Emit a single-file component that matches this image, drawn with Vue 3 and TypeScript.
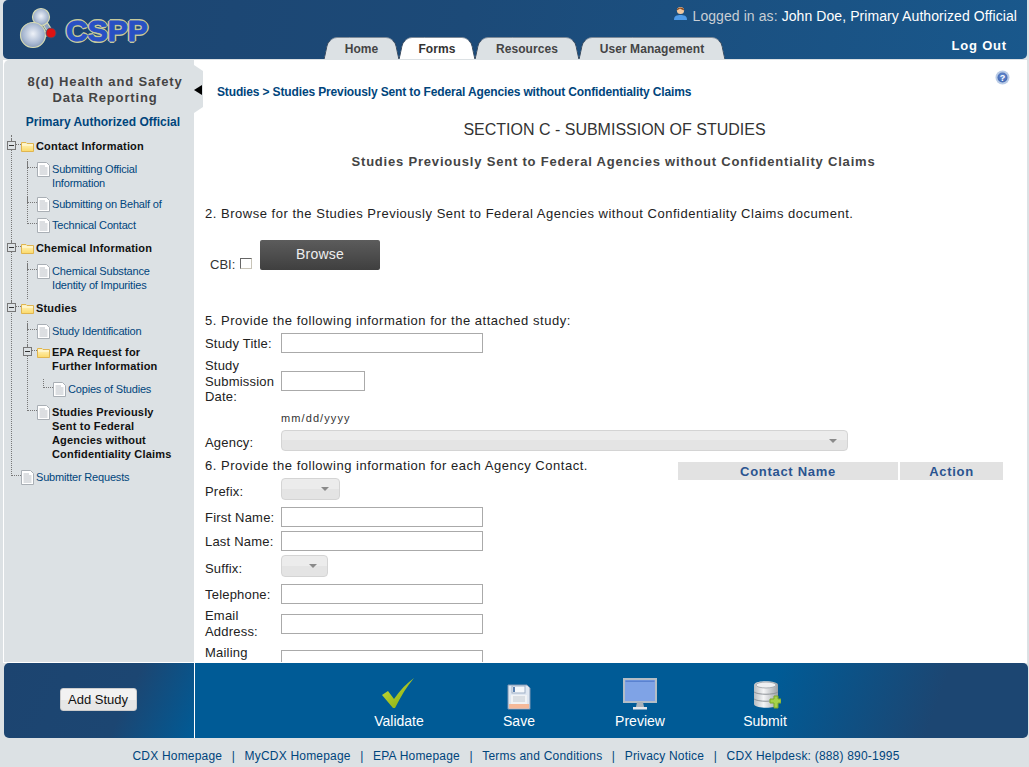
<template>
  <div class="page">
    <!-- Header -->
    <header class="header">
      <div class="logo">
        <svg class="logo-mark" width="50" height="48" viewBox="0 0 50 48">
          <defs>
            <radialGradient id="ball" cx="50%" cy="45%" r="60%">
              <stop offset="0" stop-color="#eef2f8" />
              <stop offset="0.65" stop-color="#a9b9d2" />
              <stop offset="1" stop-color="#7f93b4" />
            </radialGradient>
          </defs>
          <g stroke="#d8dcb4" stroke-width="6" stroke-linecap="round">
            <path d="M16 31 L24 13 M24 13 L34 29 M16 31 L34 29" />
          </g>
          <g stroke="#8fa3c2" stroke-width="3.5" stroke-linecap="round">
            <path d="M16 31 L24 13 M24 13 L34 29 M16 31 L34 29" />
          </g>
          <circle cx="24" cy="13" r="8.5" fill="url(#ball)" stroke="#d8dcb4" stroke-width="1.2" />
          <circle cx="16" cy="31" r="12.5" fill="url(#ball)" stroke="#d8dcb4" stroke-width="1.2" />
          <circle cx="34" cy="29" r="5" fill="#dc1212" stroke="#3a4f70" stroke-width="0.8" />
        </svg>
        <span class="logo-text">CSPP</span>
      </div>

      <div class="header-right">
        <div class="login-line">
          <svg class="user-icon" width="15" height="16" viewBox="0 0 15 16">
            <path d="M1 15 C1 10.5 4 10 7.5 10 C11 10 14 10.5 14 15 Z" fill="#4f9be8" />
            <circle cx="7.5" cy="5.5" r="3.6" fill="#f2c9a0" />
            <path d="M3.8 5.5 C3.6 1.4 11.4 1.4 11.2 5.5 C9.5 5 8 4 7 3.6 C6 4.4 5 5 3.8 5.5 Z" fill="#8a4a20" />
          </svg>
          <span class="login-label">Logged in as:</span>
          <span class="login-name">John Doe, Primary Authorized Official</span>
        </div>
        <nav class="nav-row">
          <ul class="tabs">
            <li v-for="tab in tabs" :key="tab.label" class="tab" :class="{ active: tab.active }" :style="{ width: tab.width + 'px' }">
              <span>{{ tab.label }}</span>
            </li>
          </ul>
          <a class="logout">Log Out</a>
        </nav>
      </div>
    </header>

    <!-- Middle -->
    <div class="middle">
      <aside class="sidebar">
        <div class="collapse-tab"><i class="collapse-arrow"></i></div>
        <h2 class="side-title">8(d) Health and Safety<br />Data Reporting</h2>
        <p class="side-role">Primary Authorized Official</p>

        <ul class="tree root">
          <li>
            <div class="node heading"><i class="toggle"></i><svg class="ic folder" viewBox="0 0 13 11"><use href="#folder-shape" /></svg><span>Contact Information</span></div>
            <ul class="tree">
              <li><div class="node"><svg class="ic doc" viewBox="0 0 14 15"><use href="#doc-shape" /></svg><span>Submitting Official<br />Information</span></div></li>
              <li><div class="node"><svg class="ic doc" viewBox="0 0 14 15"><use href="#doc-shape" /></svg><span>Submitting on Behalf of</span></div></li>
              <li><div class="node"><svg class="ic doc" viewBox="0 0 14 15"><use href="#doc-shape" /></svg><span>Technical Contact</span></div></li>
            </ul>
          </li>
          <li>
            <div class="node heading"><i class="toggle"></i><svg class="ic folder" viewBox="0 0 13 11"><use href="#folder-shape" /></svg><span>Chemical Information</span></div>
            <ul class="tree">
              <li class="through"><div class="node"><svg class="ic doc" viewBox="0 0 14 15"><use href="#doc-shape" /></svg><span>Chemical Substance<br />Identity of Impurities</span></div></li>
            </ul>
          </li>
          <li>
            <div class="node heading"><i class="toggle"></i><svg class="ic folder" viewBox="0 0 13 11"><use href="#folder-shape" /></svg><span>Studies</span></div>
            <ul class="tree">
              <li><div class="node"><svg class="ic doc" viewBox="0 0 14 15"><use href="#doc-shape" /></svg><span>Study Identification</span></div></li>
              <li>
                <div class="node heading"><i class="toggle"></i><svg class="ic folder" viewBox="0 0 13 11"><use href="#folder-shape" /></svg><span>EPA Request for<br />Further Information</span></div>
                <ul class="tree">
                  <li><div class="node"><svg class="ic doc" viewBox="0 0 14 15"><use href="#doc-shape" /></svg><span>Copies of Studies</span></div></li>
                </ul>
              </li>
              <li><div class="node heading current"><svg class="ic doc" viewBox="0 0 14 15"><use href="#doc-shape" /></svg><span>Studies Previously<br />Sent to Federal<br />Agencies without<br />Confidentiality Claims</span></div></li>
            </ul>
          </li>
          <li><div class="node"><svg class="ic doc" viewBox="0 0 14 15"><use href="#doc-shape" /></svg><span>Submitter Requests</span></div></li>
        </ul>

        <!-- shared tree icons -->
        <svg width="0" height="0" class="defs">
          <defs>
            <linearGradient id="folder-fill" x1="0" y1="0" x2="0" y2="1">
              <stop offset="0" stop-color="#fff6c8" />
              <stop offset="1" stop-color="#fbd968" />
            </linearGradient>
            <g id="folder-shape">
              <path d="M.5 10.5V1.5H5L6 2.5H12.5V10.5Z" fill="url(#folder-fill)" stroke="#e0b550" />
              <path d="M1 4H12" stroke="#fffbe6" />
            </g>
            <g id="doc-shape">
              <path d="M.5.5H9.5L12.5 3.5V14.5H.5Z" fill="#fff" stroke="#a9afb5" />
              <path d="M2.5 4H8M2.5 6H10.5M2.5 8H10.5M2.5 10H10.5M2.5 12H10.5" stroke="#b9bec4" />
            </g>
          </defs>
        </svg>
      </aside>

      <main class="content">
        <svg class="help" width="15" height="15" viewBox="0 0 15 15">
          <defs>
            <radialGradient id="help-ball" cx="50%" cy="40%" r="60%">
              <stop offset="0" stop-color="#6f93d8" />
              <stop offset="1" stop-color="#3f66b0" />
            </radialGradient>
          </defs>
          <circle cx="7.5" cy="7.5" r="7" fill="#b9cbe6" />
          <circle cx="7.5" cy="7.5" r="5" fill="url(#help-ball)" />
          <text x="7.5" y="10.8" text-anchor="middle" class="help-q">?</text>
        </svg>

        <p class="crumb">Studies &gt; Studies Previously Sent to Federal Agencies without Confidentiality Claims</p>
        <h1 class="section-title">SECTION C - SUBMISSION OF STUDIES</h1>
        <h2 class="section-sub">Studies Previously Sent to Federal Agencies without Confidentiality Claims</h2>

        <p class="question q2">2. Browse for the Studies Previously Sent to Federal Agencies without Confidentiality Claims document.</p>
        <div class="browse-row">
          <label class="cbi">CBI:<i class="checkbox"></i></label>
          <button class="browse">Browse</button>
        </div>

        <p class="question q5">5. Provide the following information for the attached study:</p>
        <div class="field f-title">
          <label>Study Title:</label>
          <i class="input"></i>
        </div>
        <div class="field f-date">
          <label>Study Submission Date:</label>
          <i class="input short"></i>
        </div>
        <div class="date-hint">mm/dd/yyyy</div>
        <div class="field f-agency">
          <label>Agency:</label>
          <i class="select agency"></i>
        </div>

        <div class="contact-block">
          <div class="contact-form">
            <p class="question q6">6. Provide the following information for each Agency Contact.</p>
            <div class="field f-prefix"><label>Prefix:</label><i class="select prefix"></i></div>
            <div class="field f-first"><label>First Name:</label><i class="input"></i></div>
            <div class="field f-last"><label>Last Name:</label><i class="input"></i></div>
            <div class="field f-suffix"><label>Suffix:</label><i class="select suffix"></i></div>
            <div class="field f-phone"><label>Telephone:</label><i class="input"></i></div>
            <div class="field f-email"><label>Email Address:</label><i class="input"></i></div>
            <div class="field f-mail"><label>Mailing Address:</label><i class="input"></i></div>
          </div>
          <div class="contact-table">
            <div class="th th-name">Contact Name</div>
            <div class="th th-action">Action</div>
          </div>
        </div>
      </main>
    </div>

    <!-- Action bar -->
    <div class="actions">
      <div class="actions-left">
        <button class="add-study">Add Study</button>
      </div>
      <div class="actions-main">
        <a class="action a-validate">
          <svg width="36" height="32" viewBox="0 0 36 32">
            <defs>
              <linearGradient id="check" x1="0" y1="0" x2="1" y2="1">
                <stop offset="0" stop-color="#cfe23a" />
                <stop offset="1" stop-color="#7ea50e" />
              </linearGradient>
            </defs>
            <path d="M1 17 L7 13 L13 21 C19 12 26 5 33 0 C26 8 20 18 14 30 L12 30 Z" fill="url(#check)" />
          </svg>
          <span>Validate</span>
        </a>
        <a class="action a-save">
          <svg width="24" height="26" viewBox="0 0 24 26">
            <path d="M1 1H20L23 4V25H1Z" fill="#dfe7f1" stroke="#7f96b2" />
            <rect x="5" y="2" width="13" height="7" fill="#f5f8fb" stroke="#9fb0c6" />
            <rect x="6" y="3" width="2" height="5" fill="#5a7fae" />
            <rect x="4" y="11" width="16" height="9" fill="#f1f3f5" />
            <path d="M6 13H18M6 15H18M6 17H18" stroke="#c2c9d0" />
            <rect x="2" y="20" width="20" height="4.5" fill="#f5b999" />
          </svg>
          <span>Save</span>
        </a>
        <a class="action a-preview">
          <svg width="34" height="32" viewBox="0 0 34 32">
            <rect x="1" y="1" width="32" height="23" fill="#7fa3e6" stroke="#b4bdc6" stroke-width="2" />
            <rect x="2.5" y="2.5" width="29" height="1.5" fill="#5a82d0" />
            <path d="M14 24H20L21 29H13Z" fill="#a9b2ba" />
            <rect x="10" y="29" width="14" height="2.5" fill="#e4e8ec" />
          </svg>
          <span>Preview</span>
        </a>
        <a class="action a-submit">
          <svg width="28" height="30" viewBox="0 0 28 30">
            <defs>
              <linearGradient id="db" x1="0" y1="0" x2="1" y2="0">
                <stop offset="0" stop-color="#b8bcc0" />
                <stop offset="0.4" stop-color="#f4f5f6" />
                <stop offset="1" stop-color="#9da2a7" />
              </linearGradient>
            </defs>
            <path d="M1 5C1 0 25 0 25 5V24C25 29 1 29 1 24Z" fill="url(#db)" />
            <ellipse cx="13" cy="5" rx="10" ry="3" fill="#eef0f2" stroke="#a9aeb3" />
            <path d="M1 12C5 15 21 15 25 12M1 19C5 22 21 22 25 19" stroke="#8f9499" fill="none" />
            <path d="M17 19H21V16H25V19H28V23H25V28H21V23H17Z" fill="#a6d24a" stroke="#7da92a" />
          </svg>
          <span>Submit</span>
        </a>
      </div>
    </div>

    <!-- Footer -->
    <footer class="footer">
      <template v-for="(link, i) in links" :key="link">
        <span v-if="i > 0" class="sep">|</span>
        <a>{{ link }}</a>
      </template>
    </footer>
  </div>
</template>

<script setup lang="ts">
interface Tab {
  label: string
  width: number
  active?: boolean
}

const tabs: Tab[] = [
  { label: 'Home', width: 75 },
  { label: 'Forms', width: 76, active: true },
  { label: 'Resources', width: 104 },
  { label: 'User Management', width: 146 }
]

const links: string[] = [
  'CDX Homepage',
  'MyCDX Homepage',
  'EPA Homepage',
  'Terms and Conditions',
  'Privacy Notice',
  'CDX Helpdesk: (888) 890-1995'
]
</script>

<style>
html,
body {
  margin: 0;
  background: #dce1e4;
}
</style>

<style scoped>
/* ===== Base ===== */
.page {
  width: 1029px;
  height: 767px;
  overflow: hidden;
  font-family: "Liberation Sans", Arial, sans-serif;
  color: #222;
  background: #dce1e4;
}

ul {
  list-style: none;
  margin: 0;
  padding: 0;
}

p,
h1,
h2 {
  margin: 0;
}

/* ===== Header ===== */
.header {
  margin-left: 3px;
  width: 1024px;
  height: 59px;
  display: flex;
  justify-content: space-between;
  background: linear-gradient(100deg, #1c4470 0%, #1c4a78 45%, #19588c 100%);
  border-radius: 5px 0 5px 5px;
}

.logo {
  display: flex;
  align-items: flex-start;
  padding: 7px 0 0 14px;
}

.logo-mark {
  display: block;
  margin-top: -3px;
}

.logo-text {
  margin: 8px 0 0 -1px;
  font-size: 30px;
  line-height: 32px;
  font-weight: 700;
  color: #2850c4;
  -webkit-text-stroke: 1px #2850c4;
  text-shadow:
    2px 0 0 #c5c99c, -2px 0 0 #c5c99c, 0 2px 0 #c5c99c, 0 -2px 0 #c5c99c,
    1px 1px 0 #c5c99c, -1px -1px 0 #c5c99c, 1px -1px 0 #c5c99c, -1px 1px 0 #c5c99c;
}

.header-right {
  width: 704px;
  display: flex;
  flex-direction: column;
}

.login-line {
  height: 37px;
  padding: 7px 10px 0 0;
  box-sizing: border-box;
  display: flex;
  justify-content: flex-end;
  align-items: flex-start;
  font-size: 14px;
  line-height: 18px;
  letter-spacing: 0.08px;
}

.user-icon {
  margin: -2px 5px 0 0;
}

.login-label {
  color: #c8ced4;
  margin-right: 4px;
}

.login-name {
  color: #fff;
}

.nav-row {
  display: flex;
  justify-content: space-between;
  height: 22px;
}

.tabs {
  display: flex;
  margin-left: 1px;
}

.tab {
  position: relative;
  height: 22px;
  box-sizing: border-box;
  display: flex;
  align-items: center;
  justify-content: center;
  padding-top: 1px;
  font-size: 12px;
  font-weight: 700;
  letter-spacing: 0.08px;
  color: #444;
}

.tab span {
  position: relative;
  z-index: 1;
}

.tab::before,
.tab::after {
  content: "";
  position: absolute;
  top: 0;
  bottom: 0;
  width: 60%;
  background: #dce1e4;
  border-top: 1px solid #7d8a98;
  box-sizing: border-box;
}

.tab::before {
  left: 2px;
  transform: skewX(-12deg);
  border-left: 1px solid #39495c;
  border-radius: 9px 0 0 0;
}

.tab::after {
  right: 2px;
  transform: skewX(12deg);
  border-right: 1px solid #39495c;
  border-radius: 0 9px 0 0;
}

.tab.active {
  color: #333;
  z-index: 2;
}

.tab.active::before,
.tab.active::after {
  background: #fff;
}

.logout {
  margin: 1px 20px 0 0;
  font-size: 13px;
  line-height: 16px;
  font-weight: 700;
  letter-spacing: 0.8px;
  color: #fff;
}

/* ===== Middle ===== */
.middle {
  margin: 1px 0 0 3px;
  width: 1024px;
  height: 603px;
  padding-bottom: 1px;
  display: flex;
  background: #fff;
  border-left: 1px solid #fff;
  box-sizing: border-box;
}

.sidebar {
  position: relative;
  flex: 0 0 190px;
  background: #dce1e4;
  border-radius: 5px 0 0 0;
}

.collapse-tab {
  position: absolute;
  z-index: 2;
  top: 5px;
  left: 190px;
  width: 9px;
  height: 48px;
  background: #dce1e4;
  clip-path: polygon(0 0, 100% 6px, 100% 42px, 0 100%);
}

.collapse-arrow {
  position: absolute;
  left: 0;
  top: 20px;
  width: 0;
  height: 0;
  border-style: solid;
  border-width: 5px 8px 5px 0;
  border-color: transparent #000 transparent transparent;
}

.side-title {
  padding: 14px 0 0 12px;
  font-size: 13px;
  line-height: 16px;
  font-weight: 700;
  letter-spacing: 0.85px;
  text-align: center;
  color: #444;
}

.side-role {
  margin-top: 8px;
  font-size: 12px;
  line-height: 16px;
  font-weight: 700;
  text-align: center;
  color: #00457c;
  padding-left: 8px;
}

/* ===== Tree ===== */
.tree {
  padding-left: 16px;
  padding-top: 9px;
  padding-bottom: 2px;
}

.tree.root {
  margin-top: 9px;
  padding: 0 0 0 17px;
}

.tree li {
  position: relative;
  margin-top: 7px;
}

.tree li:first-child {
  margin-top: 0;
}

/* dotted connector */
.tree li::before {
  content: "";
  position: absolute;
  left: -10px;
  top: -3px;
  width: 10px;
  height: 9px;
  border-left: 1px dotted #777;
  border-bottom: 1px dotted #777;
  box-sizing: border-box;
}

.tree li:not(:last-child)::after,
.tree li.through::after {
  content: "";
  position: absolute;
  left: -10px;
  top: 0;
  bottom: -7px;
  border-left: 1px dotted #777;
}

.tree.root > li:first-child::before {
  top: -4px;
  height: 10px;
}

.node {
  position: relative;
  display: flex;
  font-size: 11px;
  line-height: 14px;
  letter-spacing: -0.18px;
  color: #00457c;
}

.node.heading {
  font-weight: 700;
  letter-spacing: 0.18px;
  color: #111;
}

.toggle {
  position: absolute;
  z-index: 1;
  left: -14px;
  top: 2px;
  width: 9px;
  height: 9px;
  box-sizing: border-box;
  border: 1px solid #777;
  background: linear-gradient(#dce1e4 3px, #333 3px, #333 4px, #dce1e4 4px);
  background-size: 5px 7px;
  background-repeat: no-repeat;
  background-position: 1px 0;
  background-color: #dce1e4;
}

.ic {
  flex: 0 0 auto;
  display: block;
  margin-right: 2px;
}

.ic.folder {
  width: 13px;
  height: 11px;
  margin-top: 2px;
}

.ic.doc {
  width: 14px;
  height: 15px;
  margin-right: 1px;
  margin-bottom: -1px;
}

.defs {
  position: absolute;
}

/* ===== Content ===== */
.content {
  position: relative;
  flex: 1;
  min-width: 0;
  overflow: hidden;
  padding-left: 11px;
  font-size: 13px;
}

.help {
  position: absolute;
  top: 10px;
  left: 801px;
}

.help-q {
  font-family: "Liberation Sans", Arial, sans-serif;
  font-size: 9px;
  font-weight: 700;
  fill: #fff;
}

.crumb {
  margin: 25px 0 0 12px;
  font-size: 12px;
  line-height: 14px;
  font-weight: 700;
  letter-spacing: -0.14px;
  color: #00457c;
}

.section-title {
  margin: 22px 0 0 -3px;
  font-size: 16px;
  line-height: 18px;
  font-weight: 400;
  text-align: center;
  color: #333;
}

.section-sub {
  margin: 15px 0 0 -5px;
  font-size: 13px;
  line-height: 16px;
  font-weight: 700;
  letter-spacing: 0.8px;
  text-align: center;
  color: #444;
}

.question {
  font-size: 13px;
  line-height: 16px;
  letter-spacing: 0.52px;
  color: #222;
}

.q2 {
  margin-top: 36px;
}

.browse-row {
  display: flex;
  margin-top: 18px;
  height: 30px;
}

.cbi {
  display: flex;
  align-items: flex-start;
  width: 55px;
  padding: 17px 0 0 5px;
  box-sizing: border-box;
  line-height: 16px;
  font-size: 13px;
  color: #333;
}

.checkbox {
  flex: 0 0 auto;
  width: 12px;
  height: 11px;
  margin: 1px 0 0 5px;
  box-sizing: border-box;
  border: 1px solid #666;
  border-right-color: #c8c4b8;
  border-bottom-color: #c8c4b8;
  background: #fff;
}

.browse {
  width: 120px;
  height: 30px;
  padding: 0 0 2px;
  border: 0;
  border-radius: 2px;
  background: linear-gradient(#5c5c5c, #3f3f3f);
  font-family: inherit;
  font-size: 14px;
  letter-spacing: 0.2px;
  color: #eee;
}

.q5 {
  margin-top: 43px;
}

/* ===== Form rows ===== */
.field {
  display: flex;
  align-items: center;
  color: #222;
}

.field label {
  flex: 0 0 76px;
  font-size: 13px;
  line-height: 16px;
  letter-spacing: 0.2px;
}

.input {
  display: block;
  width: 202px;
  height: 20px;
  box-sizing: border-box;
  border: 1px solid #aaa;
  background: #fff;
}

.input.short {
  width: 84px;
}

.select {
  position: relative;
  display: block;
  box-sizing: border-box;
  height: 22px;
  border: 1px solid #d4d4d4;
  border-radius: 4px;
  background: linear-gradient(#ececec 50%, #e4e4e4 50%);
}

.select::after {
  content: "";
  position: absolute;
  top: 8px;
  right: 10px;
  width: 0;
  height: 0;
  border-style: solid;
  border-width: 4px 4px 0;
  border-color: #8a8a8a transparent transparent;
}

.select.agency {
  width: 567px;
  height: 21px;
}

.select.prefix {
  width: 59px;
}

.select.suffix {
  width: 47px;
}

.f-title label,
.f-first label,
.f-last label,
.f-phone label {
  padding-top: 2px;
}

.f-title {
  margin-top: 4px;
}

.f-date {
  margin-top: 5px;
}

.f-date label {
  line-height: 15.6px;
}

.date-hint {
  margin: 7px 0 0 76px;
  font-size: 11px;
  line-height: 12px;
  letter-spacing: 1.1px;
  color: #333;
}

.f-agency {
  margin-top: 6px;
  align-items: flex-start;
}

.f-agency label {
  padding-top: 5px;
}

.contact-block {
  display: flex;
  align-items: flex-start;
}

.contact-form {
  flex: 0 0 473px;
  width: 473px;
}

.q6 {
  margin-top: 7px;
  white-space: nowrap;
}

.f-prefix {
  margin-top: 4px;
  align-items: flex-start;
}

.f-prefix label {
  padding-top: 6px;
}

.f-first {
  margin-top: 7px;
}

.f-last {
  margin-top: 4px;
}

.f-suffix {
  margin-top: 4px;
  align-items: flex-start;
}

.f-suffix label {
  padding-top: 6px;
}

.f-phone {
  margin-top: 7px;
}

.f-email {
  margin-top: 4px;
  align-items: flex-start;
}

.f-email .input {
  margin-top: 6px;
}

.f-mail {
  margin-top: 5px;
  align-items: flex-start;
}

.f-mail .input {
  margin-top: 5px;
}

.contact-table {
  display: flex;
  gap: 2px;
  margin-top: 11px;
}

.th {
  height: 18px;
  background: #e2e2e2;
  font-size: 13px;
  line-height: 19px;
  font-weight: 700;
  letter-spacing: 0.7px;
  text-align: center;
  color: #2a5490;
}

.th-name {
  width: 220px;
}

.th-action {
  width: 103px;
}

/* ===== Action bar ===== */
.actions {
  margin: 0 0 0 4px;
  width: 1024px;
  height: 75px;
  display: flex;
  border-radius: 5px;
  overflow: hidden;
}

.actions-left {
  flex: 0 0 191px;
  display: flex;
  align-items: center;
  justify-content: center;
  padding: 0 2px 2px 0;
  box-sizing: border-box;
  background: linear-gradient(115deg, #1c4470 0%, #1c4672 62%, #005b96 100%);
  border-right: 1px solid #fff;
}

.add-study {
  flex: 0 0 auto;
  width: 77px;
  height: 23px;
  padding: 0;
  border: 1px solid #ccc;
  border-radius: 3px;
  background: linear-gradient(#f2f2f2 50%, #e6e6e6 50%);
  font-family: inherit;
  font-size: 13px;
  color: #111;
}

.actions-main {
  position: relative;
  flex: 1;
  background: linear-gradient(110deg, #005b96 0%, #005b96 68%, #1c4672 88%);
}

.action {
  position: absolute;
  top: 0;
  display: flex;
  flex-direction: column;
  align-items: center;
  justify-content: flex-end;
  height: 66px;
  width: 70px;
  font-size: 14px;
  line-height: 16px;
  color: #fff;
}

.action svg {
  display: block;
  margin-bottom: 3px;
}

.a-validate {
  left: 169px;
}

.a-save {
  left: 289px;
}

.a-preview {
  left: 410px;
}

.a-submit {
  left: 535px;
}

.a-submit svg {
  margin-left: 4px;
}

/* ===== Footer ===== */
.footer {
  height: 29px;
  display: flex;
  justify-content: center;
  align-items: center;
  padding: 6px 0 0 3px;
  box-sizing: border-box;
  font-size: 12px;
  letter-spacing: 0.2px;
  color: #00457c;
}

.sep {
  margin: 0 9.5px;
}
</style>
